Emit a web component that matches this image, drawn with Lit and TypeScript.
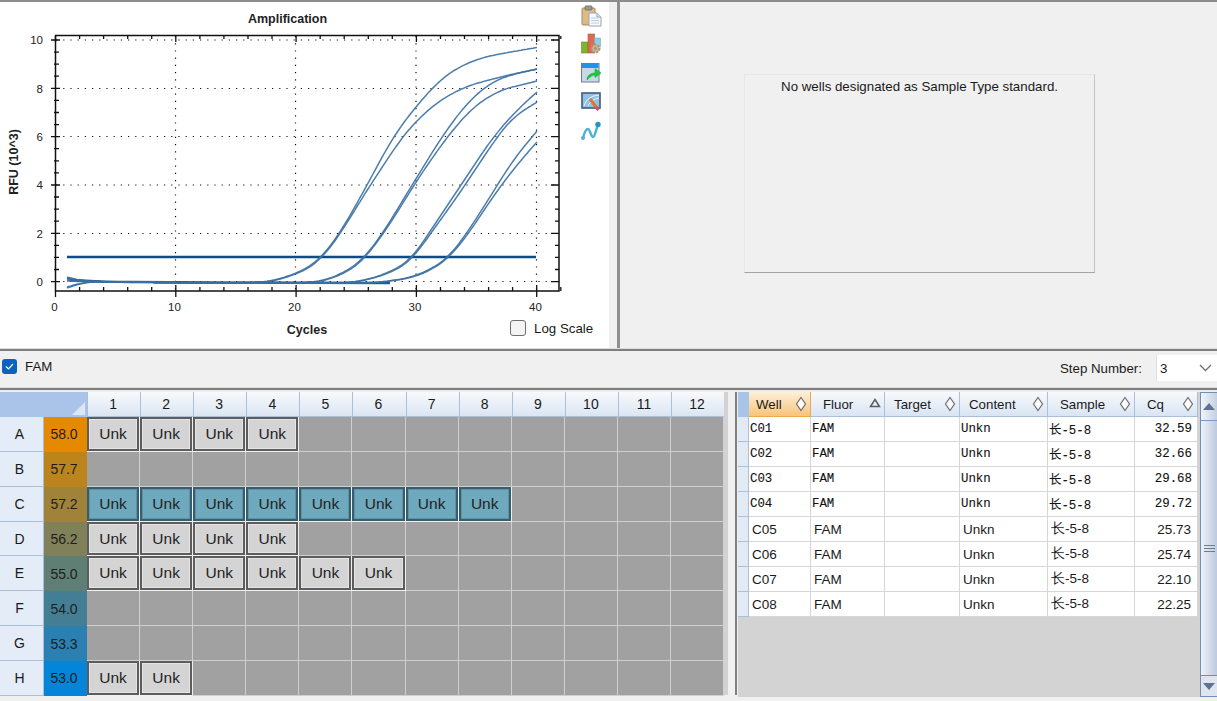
import { LitElement, html, css, svg } from "lit";
import { customElement } from "lit/decorators.js";

type P = [number, number];
/* Resample each curve's control points and low-pass them so the traces read as one continuous S. */
const smooth = (p: P[]) => {
  const start = p[0][0], end = p[p.length - 1][0];
  const ys: number[] = [];
  let k = 0;
  for (let x = start; x <= end; x += 2) {
    while (k < p.length - 2 && p[k + 1][0] < x) k++;
    const [x0, y0] = p[k], [x1, y1] = p[k + 1];
    ys.push(y0 + ((x - x0) / (x1 - x0)) * (y1 - y0));
  }
  const out = ys.map((_, i) => {
    const r = Math.min(6, i, ys.length - 1 - i);
    let s = 0;
    for (let j = i - r; j <= i + r; j++) s += ys[j];
    return s / (2 * r + 1);
  });
  return "M" + out.map((y, i) => `${start + i * 2} ${y.toFixed(1)}`).join("L");
};
const base = (y0: number, end: number): P[] => {
  const pts: P[] = [[67, y0], [76, (y0 + 281) / 2 + 0.5], [88, 281.5], [130, 282], [200, 283]];
  if (end > 260) pts.push([260, 283]);
  if (end > 330) pts.push([320, 283]);
  return pts;
};
const CURVES: P[][] = [
  [...base(278, 255), [255, 282.5], [273, 281], [300, 272], [312, 265], [322, 257], [340, 233], [360, 198], [393, 137], [417, 105], [440, 80], [457, 68], [480, 58], [510, 52], [537, 47.5]],
  [...base(277, 255), [255, 282.5], [275, 281], [302, 272], [314, 265], [323, 257], [341, 233], [362, 198], [400, 140], [417, 120], [440, 100], [467, 86], [500, 77], [537, 69]],
  [...base(278, 300), [300, 283], [323, 281], [345, 272], [356, 265], [365, 257], [383, 233], [403, 200], [417, 177], [443, 135], [467, 103], [490, 83], [510, 75], [537, 69]],
  [...base(287, 300), [300, 283], [325, 281], [347, 272], [358, 265], [366, 257], [384, 233], [405, 200], [417, 180], [447, 137], [473, 107], [500, 90], [537, 81]],
  [...base(280, 345), [345, 283], [367, 280], [390, 272], [403, 265], [413, 257], [429, 233], [453, 197], [493, 137], [517, 110], [537, 92]],
  [...base(279, 345), [345, 283], [368, 280], [392, 272], [405, 265], [414, 257], [431, 233], [457, 197], [497, 137], [513, 117], [537, 102]],
  [...base(281, 370), [370, 283], [390, 281], [413, 277], [433, 268], [449, 257], [467, 233], [490, 197], [513, 160], [537, 131]],
  [...base(288, 370), [370, 283], [392, 281], [415, 277], [435, 268], [450, 257], [469, 233], [492, 198], [515, 167], [537, 142]],
];

const XS = [55.5, 175.5, 295.5, 416, 536.5];
const YS: [string, number][] = [["10", 40], ["8", 88.5], ["6", 136.5], ["4", 185], ["2", 233.5], ["0", 281.5]];

const chart = () => {
  const ticks: string[] = [];
  for (let c = 0; c <= 42; c += 2) {
    const x = 55.5 + c * 12.03;
    const major = c % 10 === 0;
    ticks.push(`M${x.toFixed(1)} 291V${major ? 297 : 287}`);
    if (major && c) ticks.push(`M${x.toFixed(1)} 291V285`);
    ticks.push(`M${x.toFixed(1)} 36V${major ? 42 : 39}`);
  }
  for (let i = 0; i <= 20; i++) {
    const y = 40 + i * 12.08;
    const major = i % 4 === 0;
    ticks.push(`M${major ? 51 : 54} ${y.toFixed(1)}H${major ? 60 : 59}`);
    ticks.push(`M559 ${y.toFixed(1)}H${major ? 551 : 555}`);
  }
  return html`<svg class="plot" width="578" height="346" viewBox="0 2 578 346">
    <g class="grid-dots">
      ${XS.slice(1).map((x) => svg`<path d="M${x} 36V291"></path>`)}
      ${YS.map(([, y]) => svg`<path d="M56 ${y}H559"></path>`)}
    </g>
    <path class="threshold" d="M67 257H536"></path>
    <path class="baseline" d="M70 280C85 280 90 282 130 282S300 283 390 283"></path>
    ${CURVES.map((c) => svg`<path class="curve" d=${smooth(c)}></path>`)}
    <rect class="frame" x="55.5" y="35.5" width="503.5" height="255.5"></rect>
    <path class="tick" d=${ticks.join("")}></path>
    <text class="t b" x="287.5" y="23" text-anchor="middle">Amplification</text>
    ${YS.map(([l, y]) => svg`<text class="t" x="43" y=${y + 4} text-anchor="end">${l}</text>`)}
    ${["0", "10", "20", "30", "40"].map((l, i) => svg`<text class="t" x=${XS[i] - 1} y="311" text-anchor="middle">${l}</text>`)}
    <text class="t b" x="307" y="334" text-anchor="middle">Cycles</text>
    <text class="t b" transform="translate(18 162) rotate(-90)" text-anchor="middle">RFU (10^3)</text>
  </svg>`;
};

const ICONS = [
  html`<svg width="22" height="22" viewBox="0 0 22 22"><rect x="1" y="3" width="13" height="17" rx="1" fill="#dcbb85" stroke="#a98d5c"></rect><rect x="4" y="1" width="7" height="4" rx="1" fill="#9a9a8c" stroke="#77776c"></rect><path d="M8 8h8l4 4v9H8z" fill="#f8fafd" stroke="#9aa4b0"></path><path d="M16 8v4h4" fill="#dfe6ee" stroke="#9aa4b0"></path><path d="M10 13h8M10 15.500h8M10 18h8" stroke="#b8cfe6"></path></svg>`,
  html`<svg width="22" height="22" viewBox="0 -1 22 22"><rect x=".5" y="7" width="6.500" height="11" fill="#7fb42c" stroke="#5f9220" stroke-width=".6"></rect><rect x="7" y="-1" width="6.500" height="19" fill="#d96c52" stroke="#b9533c" stroke-width=".6"></rect><rect x="13.500" y="3" width="6" height="9" fill="#93cde4" stroke="#6fb0cc" stroke-width=".6"></rect><circle cx="14.500" cy="13.500" r="4" fill="#cdb38c" stroke="#ad9470" stroke-width="2" stroke-dasharray="2 1.400"></circle><circle cx="14.500" cy="13.500" r="1.500" fill="#8c9aa8"></circle></svg>`,
  html`<svg width="22" height="22" viewBox="0 0 22 22"><rect x=".5" y=".5" width="17.500" height="18.500" fill="#cdd6e4" stroke="#6f7d92"></rect><rect x="1" y="1" width="16.500" height="4" fill="#2491e4"></rect><path d="M6 17c0-4 3-7 8-7V5.500l6 4.500-6 4.500V12c-3 0-5 2-8 5z" fill="#12cf38" stroke="#0ea02c" stroke-width=".5"></path></svg>`,
  html`<svg width="22" height="22" viewBox="0 0 22 22"><rect x="1" y="1" width="18" height="15" fill="#8fc3e6" stroke="#48597c" stroke-width="1.600"></rect><path d="M3 14c2-6 6-10 15-11M7 14c2-4 5-7 11-8" fill="none" stroke="#eef6fb"></path><path d="M9 7l6.500 8.500" stroke="#e0762c" stroke-width="3"></path><path d="M15 15l2.500 3" stroke="#d14f6a" stroke-width="3"></path></svg>`,
  html`<svg width="22" height="22" viewBox="0 0 22 22"><path d="M2 17c1-4 3-9 5-9s3 8 5 8 3-8 5-12" fill="none" stroke="#4fb2d2" stroke-width="2.500"></path><circle cx="2" cy="17" r="2" fill="#4fb2d2"></circle><circle cx="17" cy="3.500" r="2.700" fill="#2296c0"></circle></svg>`,
];

const ROWS = "ABCDEFGH".split("");
const TEMPS = [
  ["58.0", "#e58a00"], ["57.7", "#bb841c"], ["57.2", "#a08238"], ["56.2", "#80805a"],
  ["55.0", "#5f7f74"], ["54.0", "#437e95"], ["53.3", "#2a80b0"], ["53.0", "#0585d8"],
];
const FILLED: Record<string, number> = { A: 4, B: 0, C: 8, D: 4, E: 6, F: 0, G: 0, H: 2 };
const TABLE_ROWS = [
  ["C01", "32.59"], ["C02", "32.66"], ["C03", "29.68"], ["C04", "29.72"],
  ["C05", "25.73"], ["C06", "25.74"], ["C07", "22.10"], ["C08", "22.25"],
];
const diamond = html`<svg class="sort" width="12" height="16" viewBox="0 0 12 16"><path d="M6 1.500L10.500 8 6 14.500 1.500 8z" fill="#fbfbfb" stroke="#6c6c6c" stroke-width="1.200"></path></svg>`;
const triangle = html`<svg class="sort" width="12" height="16" viewBox="0 0 12 16"><path d="M6 3.500L10.500 10.500H1.500z" fill="none" stroke="#5c5c5c" stroke-width="1.500"></path></svg>`;

@customElement("app-root")
export class AppRoot extends LitElement {
  static styles = css`
    :host { display: block; width: 1217px; height: 701px; overflow: hidden; background: #f0f0f0; font-family: "Liberation Sans", Arial, sans-serif; font-size: 13.300px; color: #1a1a1a; }
    .top { display: grid; grid-template-columns: 609px 8px 3px 1fr; height: 346px; border-top: 2px solid #8c8c8c; }
    .chart-panel { position: relative; display: flex; background: #fff; }
    .plot { display: block; flex: none; }
    .grid-dots path { fill: none; stroke: #111; stroke-width: 1.200; stroke-dasharray: 1.200 6; }
    .threshold { fill: none; stroke: #0f4c85; stroke-width: 2.500; }
    .baseline { fill: none; stroke: #1f5a92; stroke-width: 2.400; }
    .curve { fill: none; stroke: #3a6fa2; stroke-width: 1.500; stroke-opacity: .9; }
    .frame { fill: none; stroke: #111; stroke-width: 1.500; }
    .tick { fill: none; stroke: #111; stroke-width: 1.300; }
    .t { font: 11.500px "Liberation Sans", Arial, sans-serif; fill: #222; }
    .t.b { font-weight: 700; font-size: 12.500px; }
    .icons { display: flex; flex-direction: column; gap: 7px; padding: 3px 0 0 3px; }
    .icons svg { display: block; overflow: visible; }
    .log { position: absolute; left: 510px; top: 318px; display: flex; align-items: center; gap: 8px; }
    .box { width: 14px; height: 14px; border: 1px solid #6f6f6f; border-radius: 3px; background: #f4f4f4; }
    .gutter { background: #f0f0f0; }
    .vbar { background: #8f8f8f; }
    .std { background: #f0f0f0; padding: 72px 122px 0 124px; }
    .std-box { height: 194px; border: 1px solid #e6e6e6; border-bottom-color: #a3a3a3; border-right-color: #c4c4c4; text-align: center; padding-top: 3px; line-height: 17px; }
    .hbar { height: 3px; background: #7f7f7f; border-top: 1px solid #dcdcdc; box-sizing: border-box; }
    .filter { display: flex; align-items: center; height: 36px; justify-content: space-between; }
    .fam { display: flex; align-items: center; gap: 8px; padding: 0 0 6px 2px; }
    .checked { width: 15px; height: 15px; border-radius: 3px; background: #0a64bf; display: grid; place-items: center; }
    .step { display: flex; align-items: center; gap: 14px; padding-bottom: 2px; }
    .select { width: 61px; height: 26px; background: #fff; display: flex; align-items: center; justify-content: space-between; box-sizing: border-box; padding: 0 5px 0 3px; border-left: 1px solid #e0e0e0; }
    .bottom { display: flex; height: 305px; border-top: 1px solid #e9e9e9; padding-top: 1px; }
    .plate { width: 735px; flex: none; background: #f0f0f0; display: flex; }
    .plate-grid { display: grid; grid-template-columns: 44px 43px repeat(12, 53.100px); grid-template-rows: 25px repeat(8, 34.860px); height: 303px; align-content: start; background: #f0f0f0; }
    .edge { width: 4px; height: 303px; background: #d2d2d2; }
    .corner { background: #a9c4e8; position: relative; grid-column: span 2; }
    .corner::after { content: ""; position: absolute; right: 2px; bottom: 2px; border-style: solid; border-width: 0 0 13px 13px; border-color: transparent transparent #dce7f5 transparent; }
    .ch { background: linear-gradient(#f7f9fc, #dbe6f3); border-left: 1px solid #a9c0d8; border-bottom: 1px solid #a9c0d8; display: grid; place-items: center; padding-right: 2px; box-sizing: border-box; font-size: 14px; }
    .rh { background: #e4ecf7; border-right: 1px solid #a9c0d8; border-bottom: 1px solid #a9c0d8; display: grid; place-items: center; padding-right: 4px; font-size: 14px; }
    .temp { display: grid; place-items: center; font-size: 14px; color: #1e1e1e; padding-right: 3px; }
    .cell { background: #a1a1a1; border-right: 1px solid #d0d0d0; border-bottom: 1px solid #d0d0d0; box-sizing: border-box; }
    .well { background: #d4d4d4; border: 2px solid #5d5d5d; box-shadow: inset 0 0 0 1px #e4e4e4; display: grid; place-items: center; font-size: 15.500px; color: #222; box-sizing: border-box; margin-right: 1px; margin-bottom: 1px; }
    .well.sel { background: #6fa9bd; border-color: #385e6d; box-shadow: inset 0 0 0 1px #5d93a6; }
    .vsep { width: 2px; height: 303px; background: #7f7f7f; flex: none; margin-right: 1px; }
    .table { width: 460px; height: 305px; background: #d3d3d3; flex: none; }
    .tgrid { display: grid; grid-template-columns: 11px 62px 74px 75px 88px 87px 63px; grid-auto-rows: 25px; width: 460px; }
    .th-corner { background: #a9c4e8; }
    .th { background: linear-gradient(#f7f9fc, #d9e5f3); border-right: 1px solid #a9c0d8; border-bottom: 1px solid #a9c0d8; display: flex; align-items: center; justify-content: space-between; padding: 0 3px 0 12px; box-sizing: border-box; }
    .th.active { background: linear-gradient(#fdf0d9, #f8c478); border-right-color: #eba94f; border-bottom-color: #eba94f; padding-left: 7px; }
    .th.tight { padding-left: 9px; }
    .sort { flex: none; display: block; }
    .rhead { background: #e2eaf6; border-right: 1px solid #a9c0d8; border-bottom: 1px solid #a9c0d8; box-sizing: border-box; }
    .td { background: #fff; border-right: 1px solid #d6d6d6; border-bottom: 1px solid #d6d6d6; box-sizing: border-box; display: flex; align-items: center; white-space: nowrap; overflow: hidden; }
    .td.old { font: 12.400px "Liberation Mono", "Noto Sans CJK SC", monospace; -webkit-text-stroke: 0.1px #111; padding-left: 1px; color: #111; }
    .td.new { font-size: 13.500px; padding-left: 3px; }
    .td.num { justify-content: flex-end; padding-right: 5px; }
    .td.new.num { padding-right: 6px; }
    .scroll { width: 17px; height: 305px; flex: none; box-sizing: border-box; border: 1px solid #6f8fb6; border-right: 0; background: #e6ebf4; display: flex; flex-direction: column; }
    .sb-btn { height: 28px; box-sizing: border-box; background: linear-gradient(90deg, #f2f5fa, #c4d0e2); display: grid; place-items: center; border-bottom: 1px solid #7d99bd; }
    .sb-thumb { flex: 1; background: linear-gradient(90deg, #eef2f8, #bccadf); display: grid; place-items: center; border-bottom: 1px solid #6f8fb6; }
    .sb-down { height: 20px; background: #dfe5ef; display: grid; place-items: center; }
    .gap { width: 2px; height: 305px; background: #d3d3d3; flex: none; }
  `;

  render() {
    return html`
      <div class="top">
        <div class="chart-panel">
          ${chart()}
          <div class="icons">${ICONS}</div>
          <div class="log"><span class="box"></span><span>Log Scale</span></div>
        </div>
        <div class="gutter"></div>
        <div class="vbar"></div>
        <div class="std"><div class="std-box">No wells designated as Sample Type standard.</div></div>
      </div>
      <div class="hbar"></div>
      <div class="filter">
        <div class="fam">
          <span class="checked"><svg width="11" height="11" viewBox="0 0 11 11"><path d="M2 5.500l2.500 2.500L9 3" fill="none" stroke="#fff" stroke-width="1.200"></path></svg></span>
          <span>FAM</span>
        </div>
        <div class="step">
          <span>Step Number:</span>
          <div class="select"><span>3</span><svg width="13" height="8" viewBox="0 0 13 8"><path d="M1 1l5.500 5.500L12 1" fill="none" stroke="#707070" stroke-width="1.300"></path></svg></div>
        </div>
      </div>
      <div class="hbar"></div>
      <div class="bottom">
        <div class="plate">
          <div class="plate-grid">
            <div class="corner"></div>
            ${Array.from({ length: 12 }, (_, i) => html`<div class="ch">${i + 1}</div>`)}
            ${ROWS.map((r, ri) => html`
              <div class="rh">${r}</div>
              <div class="temp" style="background:${TEMPS[ri][1]}">${TEMPS[ri][0]}</div>
              ${Array.from({ length: 12 }, (_, c) =>
                c < FILLED[r]
                  ? html`<div class="well ${r === "C" ? "sel" : ""}">Unk</div>`
                  : html`<div class="cell"></div>`
              )}
            `)}
          </div>
          <div class="edge"></div>
        </div>
        <div class="vsep"></div>
        <div class="table">
          <div class="tgrid">
            <div class="th-corner"></div>
            <div class="th active"><span>Well</span>${diamond}</div>
            <div class="th"><span>Fluor</span>${triangle}</div>
            <div class="th tight"><span>Target</span>${diamond}</div>
            <div class="th tight"><span>Content</span>${diamond}</div>
            <div class="th"><span>Sample</span>${diamond}</div>
            <div class="th"><span>Cq</span>${diamond}</div>
            ${TABLE_ROWS.map(([w, q], i) => {
              const k = i < 4 ? "old" : "new";
              return html`
                <div class="rhead"></div>
                <div class="td ${k}">${w}</div>
                <div class="td ${k}">FAM</div>
                <div class="td ${k}"></div>
                <div class="td ${k}">Unkn</div>
                <div class="td ${k}">长-5-8</div>
                <div class="td ${k} num">${q}</div>
              `;
            })}
          </div>
        </div>
        <div class="gap"></div>
        <div class="scroll">
          <div class="sb-btn"><svg width="12" height="7" viewBox="0 0 12 7"><path d="M6 0l6 7H0z" fill="#5d7391"></path></svg></div>
          <div class="sb-thumb"><svg width="11" height="7" viewBox="0 0 11 7"><path d="M0 .5h11M0 3.500h11M0 6.500h11" stroke="#6b7d96"></path></svg></div>
          <div class="sb-down"><svg width="12" height="7" viewBox="0 0 12 7"><path d="M0 0h12L6 7z" fill="#5d7391"></path></svg></div>
        </div>
      </div>
    `;
  }
}
